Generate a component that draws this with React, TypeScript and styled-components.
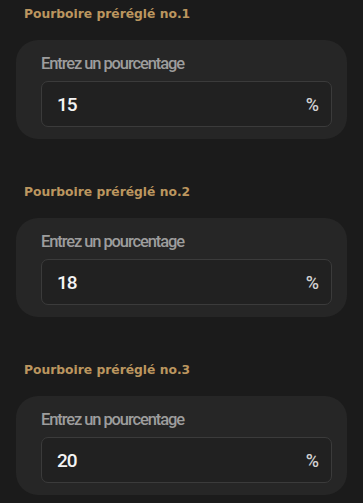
import React from "react";
import styled, { createGlobalStyle } from "styled-components";

const Global = createGlobalStyle`
  html, body { margin: 0; padding: 0; background: #1b1b1b; }
  body { font-family: Roboto, "Noto Sans", sans-serif; }
`;

const Page = styled.div`
  display: flex;
  flex-direction: column;
  gap: 46px;
  padding: 7px 16px 0 16px;
  width: 331px;
`;

const Section = styled.section`
  display: flex;
  flex-direction: column;
`;

const Heading = styled.h3`
  margin: 0 0 0 8px;
  font-family: "DejaVu Sans", sans-serif;
  font-weight: 700;
  font-size: 12.3px;
  line-height: 14px;
  color: #bb965f;
  letter-spacing: 0;
`;

const Card = styled.div`
  margin-top: 19px;
  background: #262626;
  border-radius: 22px;
  padding: 13px 15px 12px 25px;
  display: flex;
  flex-direction: column;
  gap: 6px;
`;

const Label = styled.label`
  font-size: 16.5px;
  font-weight: 500;
  line-height: 22px;
  letter-spacing: -1.1px;
  color: #9d9d9d;
`;

const InputBox = styled.div`
  box-sizing: border-box;
  height: 46px;
  border: 1px solid #3b3b3b;
  border-radius: 7px;
  background: #212121;
  display: flex;
  align-items: center;
  justify-content: space-between;
  padding: 0 12px 0 15px;
`;

const Value = styled.span`
  font-size: 19px;
  font-weight: 500;
  letter-spacing: -1px;
  color: #f4f4f4;
`;

const Unit = styled.span`
  font-size: 18px;
  font-weight: 500;
  color: #d0d0d0;
`;

const presets = [
  { n: 1, v: "15" },
  { n: 2, v: "18" },
  { n: 3, v: "20" },
];

export default function App() {
  return (
    <>
      <Global />
      <Page>
        {presets.map((p) => (
          <Section key={p.n}>
            <Heading>Pourboire préréglé no.{p.n}</Heading>
            <Card>
              <Label>Entrez un pourcentage</Label>
              <InputBox>
                <Value>{p.v}</Value>
                <Unit>%</Unit>
              </InputBox>
            </Card>
          </Section>
        ))}
      </Page>
    </>
  );
}
